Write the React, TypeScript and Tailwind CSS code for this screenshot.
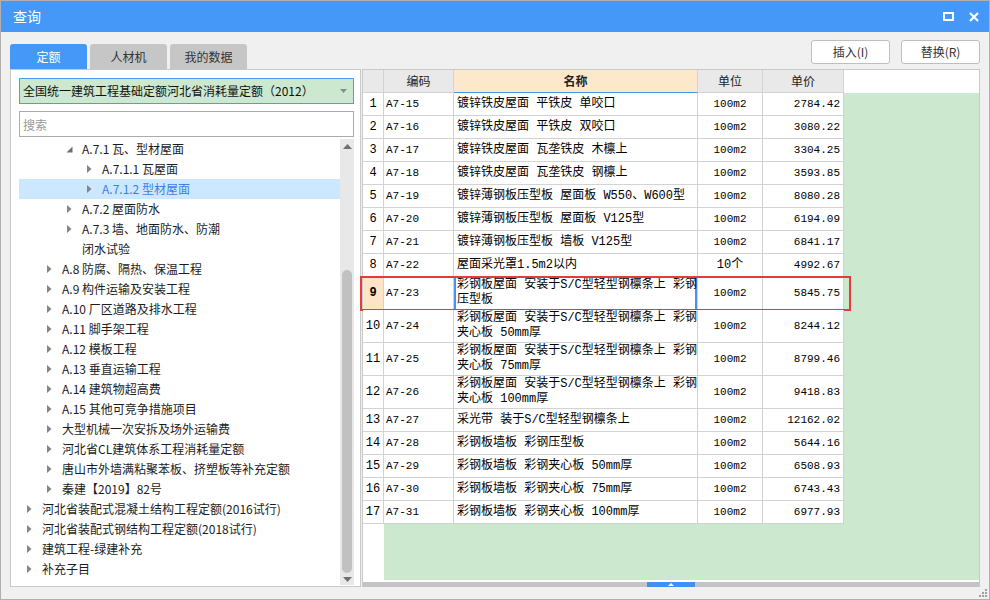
import React from "react";

type TreeItem = { level: 1 | 2 | 3 | 4; label: string; arrow?: "open" | "closed" | "none"; selected?: boolean };

const tree: TreeItem[] = [
  { level: 3, label: "A.7.1 瓦、型材屋面", arrow: "open" },
  { level: 4, label: "A.7.1.1 瓦屋面" },
  { level: 4, label: "A.7.1.2 型材屋面", selected: true },
  { level: 3, label: "A.7.2 屋面防水" },
  { level: 3, label: "A.7.3 墙、地面防水、防潮" },
  { level: 3, label: "闭水试验", arrow: "none" },
  { level: 2, label: "A.8 防腐、隔热、保温工程" },
  { level: 2, label: "A.9 构件运输及安装工程" },
  { level: 2, label: "A.10 厂区道路及排水工程" },
  { level: 2, label: "A.11 脚手架工程" },
  { level: 2, label: "A.12 模板工程" },
  { level: 2, label: "A.13 垂直运输工程" },
  { level: 2, label: "A.14 建筑物超高费" },
  { level: 2, label: "A.15 其他可竞争措施项目" },
  { level: 2, label: "大型机械一次安拆及场外运输费" },
  { level: 2, label: "河北省CL建筑体系工程消耗量定额" },
  { level: 2, label: "唐山市外墙满粘聚苯板、挤塑板等补充定额" },
  { level: 2, label: "秦建【2019】82号" },
  { level: 1, label: "河北省装配式混凝土结构工程定额(2016试行)" },
  { level: 1, label: "河北省装配式钢结构工程定额(2018试行)" },
  { level: 1, label: "建筑工程-绿建补充" },
  { level: 1, label: "补充子目" },
];

const indent: Record<number, string> = {
  1: "pl-[8px]",
  2: "pl-[28px]",
  3: "pl-[48px]",
  4: "pl-[68px]",
};

type Quota = { n: number; code: string; name: string[]; unit: string; price: string };

const rows: Quota[] = [
  { n: 1, code: "A7-15", name: ["镀锌铁皮屋面 平铁皮 单咬口"], unit: "100m2", price: "2784.42" },
  { n: 2, code: "A7-16", name: ["镀锌铁皮屋面 平铁皮 双咬口"], unit: "100m2", price: "3080.22" },
  { n: 3, code: "A7-17", name: ["镀锌铁皮屋面 瓦垄铁皮 木檩上"], unit: "100m2", price: "3304.25" },
  { n: 4, code: "A7-18", name: ["镀锌铁皮屋面 瓦垄铁皮 钢檩上"], unit: "100m2", price: "3593.85" },
  { n: 5, code: "A7-19", name: ["镀锌薄钢板压型板 屋面板 W550、W600型"], unit: "100m2", price: "8080.28" },
  { n: 6, code: "A7-20", name: ["镀锌薄钢板压型板 屋面板 V125型"], unit: "100m2", price: "6194.09" },
  { n: 7, code: "A7-21", name: ["镀锌薄钢板压型板 墙板 V125型"], unit: "100m2", price: "6841.17" },
  { n: 8, code: "A7-22", name: ["屋面采光罩1.5m2以内"], unit: "10个", price: "4992.67" },
  { n: 9, code: "A7-23", name: ["彩钢板屋面 安装于S/C型轻型钢檩条上 彩钢", "压型板"], unit: "100m2", price: "5845.75" },
  { n: 10, code: "A7-24", name: ["彩钢板屋面 安装于S/C型轻型钢檩条上 彩钢", "夹心板 50mm厚"], unit: "100m2", price: "8244.12" },
  { n: 11, code: "A7-25", name: ["彩钢板屋面 安装于S/C型轻型钢檩条上 彩钢", "夹心板 75mm厚"], unit: "100m2", price: "8799.46" },
  { n: 12, code: "A7-26", name: ["彩钢板屋面 安装于S/C型轻型钢檩条上 彩钢", "夹心板 100mm厚"], unit: "100m2", price: "9418.83" },
  { n: 13, code: "A7-27", name: ["采光带 装于S/C型轻型钢檩条上"], unit: "100m2", price: "12162.02" },
  { n: 14, code: "A7-28", name: ["彩钢板墙板 彩钢压型板"], unit: "100m2", price: "5644.16" },
  { n: 15, code: "A7-29", name: ["彩钢板墙板 彩钢夹心板 50mm厚"], unit: "100m2", price: "6508.93" },
  { n: 16, code: "A7-30", name: ["彩钢板墙板 彩钢夹心板 75mm厚"], unit: "100m2", price: "6743.43" },
  { n: 17, code: "A7-31", name: ["彩钢板墙板 彩钢夹心板 100mm厚"], unit: "100m2", price: "6977.93" },
];

function Arrow({ kind }: { kind: "open" | "closed" | "none" }) {
  return (
    <span className="flex w-[15px] shrink-0 items-center">
      {kind === "closed" && (
        <svg width="5" height="8" viewBox="0 0 5 8">
          <polygon points="0,0 4.5,4 0,8" fill="#848484" />
        </svg>
      )}
      {kind === "open" && (
        <svg width="7" height="7" viewBox="0 0 7 7" className="-ml-[1px]">
          <polygon points="6.5,0.5 6.5,6.5 0.5,6.5" fill="#6e6e6e" />
        </svg>
      )}
    </span>
  );
}

function TreePanel() {
  return (
    <div className="flex h-[518px] w-[351px] shrink-0 flex-col border border-[#c9c9c9] bg-white pl-[8px] pr-[6px]">
      <div className="mt-[8px] flex h-[26px] items-center justify-between border border-[#4d9bf5] bg-[#cce8cf] pl-[3px] pr-[6px] text-[12px] text-[#111]">
        <span>全国统一建筑工程基础定额河北省消耗量定额（2012）</span>
        <svg width="7" height="4" viewBox="0 0 7 4">
          <polygon points="0,0 7,0 3.5,4" fill="#8a8a8a" />
        </svg>
      </div>
      <input
        readOnly
        placeholder="搜索"
        className="mt-[7px] h-[26px] border border-[#ababab] bg-white px-[3px] text-[12px] outline-none placeholder:text-[#9a9a9a]"
      />
      <div className="mt-[2px] flex min-h-0 flex-1 pb-[1px]">
        <div className="flex-1">
          {tree.map((t) => (
            <div
              key={t.label}
              className={`flex h-[20px] items-center text-[12px] leading-[20px] ${indent[t.level]} ${
                t.selected ? "bg-[#cce8ff] text-[#3a7fe6]" : "text-[#1c1c1c]"
              }`}
            >
              <Arrow kind={t.arrow ?? "closed"} />
              <span className="whitespace-nowrap">{t.label}</span>
            </div>
          ))}
        </div>
        <div className="flex w-[14px] shrink-0 flex-col items-center bg-[#e8e8e8]">
          <div className="flex h-[10px] w-full items-end justify-center">
            <svg width="9" height="5" viewBox="0 0 9 5">
              <polygon points="0,5 9,5 4.5,0" fill="#707070" />
            </svg>
          </div>
          <div className="flex-1" />
          <div className="h-[303px] w-[10px] rounded-full bg-[#c1c1c1]" />
          <div className="flex h-[12px] w-full items-center justify-center">
            <svg width="9" height="5" viewBox="0 0 9 5">
              <polygon points="0,0 9,0 4.5,5" fill="#707070" />
            </svg>
          </div>
        </div>
      </div>
    </div>
  );
}

const cell = "shrink-0 border-r border-b border-[#d3d3d3]";

function QuotaRow({ r }: { r: Quota }) {
  const tall = r.name.length > 1;
  const active = r.n === 9;
  return (
    <div className={`relative flex ${tall ? "h-[33px]" : "h-[23px]"}`}>
      <div
        className={`${cell} flex w-[21px] items-center justify-center text-[12px] ${
          active ? "bg-[#fde4c6] font-bold" : "bg-white"
        }`}
      >
        {r.n}
      </div>
      <div className={`${cell} flex w-[70px] items-center bg-white pl-[2px] text-[11px]`}>{r.code}</div>
      <div
        className={`${cell} flex w-[244px] flex-col justify-center overflow-hidden bg-white pl-[3px] text-[12px] leading-[15px] ${
          active ? "shadow-[inset_2px_0_0_#4a92f0,inset_-2px_0_0_#4a92f0]" : ""
        }`}
      >
        {r.name.map((line) => (
          <span key={line} className="whitespace-pre">
            {line}
          </span>
        ))}
      </div>
      <div className={`${cell} flex w-[65px] items-center justify-center bg-white text-[11px]`}>
        {r.unit === "10个" ? <span className="text-[12px]">10个</span> : r.unit}
      </div>
      <div className={`${cell} flex w-[81px] items-center justify-end bg-white pr-[3px] text-[11px]`}>{r.price}</div>
      {active && (
        <div className="pointer-events-none absolute -left-[3px] -top-[1px] h-[35px] w-[491px] border-2 border-[#e53b3b]" />
      )}
    </div>
  );
}

function QuotaTable() {
  return (
    <div className="ml-[1px] flex h-[518px] flex-1 flex-col border-x border-t border-[#c9c9c9] bg-white [font-family:'Liberation_Mono','Noto_Sans_CJK_SC',monospace] text-[#000]">
      <div className="flex h-[23px] shrink-0 text-[12px] text-[#222] [font-family:'Noto_Sans_CJK_SC',sans-serif]">
        <div className={`${cell} w-[21px] bg-[#e9e9e9]`} />
        <div className={`${cell} flex w-[70px] items-center justify-center bg-[#e9e9e9]`}>编码</div>
        <div className="flex w-[244px] shrink-0 items-center justify-center border-r border-b border-r-[#d3d3d3] border-b-[#4a92f0] bg-[#fde8cc] font-bold">
          名称
        </div>
        <div className={`${cell} flex w-[65px] items-center justify-center bg-[#e9e9e9]`}>单位</div>
        <div className={`${cell} flex w-[81px] items-center justify-center bg-[#e9e9e9]`}>单价</div>
      </div>
      <div className="flex flex-1 flex-col bg-[#cce8cf]">
        {rows.map((r) => (
          <QuotaRow key={r.n} r={r} />
        ))}
        <div className="flex flex-1">
          <div className="w-[21px] bg-white" />
        </div>
      </div>
      <div className="h-[2px] shrink-0 bg-white" />
      <div className="flex h-[5px] shrink-0 justify-center bg-[#c4c4c4]">
        <div className="flex w-[48px] items-center justify-center bg-[#3f8ff5]">
          <svg width="6" height="3" viewBox="0 0 6 3">
            <polygon points="0,3 6,3 3,0" fill="#ffffff" />
          </svg>
        </div>
      </div>
    </div>
  );
}

export default function App() {
  const tabs = ["定额", "人材机", "我的数据"];
  return (
    <div className="flex h-[600px] w-[990px] flex-col border border-[#b0b0b0] bg-[#f0f0f0] [font-family:'Noto_Sans_CJK_SC',sans-serif]">
      <div className="flex h-[31px] shrink-0 items-center justify-between bg-[#4597f8] pl-[12px] pr-[10px] text-white">
        <span className="text-[14px]">查询</span>
        <div className="flex items-center gap-[15px]">
          <svg width="11" height="9" viewBox="0 0 11 9">
            <rect x="1" y="1" width="9" height="7" fill="none" stroke="#fff" strokeWidth="2" />
          </svg>
          <svg width="10" height="10" viewBox="0 0 10 10">
            <path d="M1 1 L9 9 M9 1 L1 9" stroke="#fff" strokeWidth="2.2" />
          </svg>
        </div>
      </div>

      <div className="flex flex-1 flex-col px-[9px]">
        <div className="flex h-[37px] shrink-0 items-end justify-between">
          <div className="flex gap-[3px]">
            {tabs.map((t, i) => (
              <div
                key={t}
                className={`flex h-[25px] w-[77px] items-center justify-center rounded-t-[3px] text-[12px] ${
                  i === 0 ? "bg-[#4597f8] text-white" : "bg-[#c6c6c6] text-[#333]"
                }`}
              >
                {t}
              </div>
            ))}
          </div>
          <div className="flex gap-[11px] self-start pt-[8px]">
            <button className="h-[24px] w-[79px] rounded-[3px] border border-[#bfbfbf] bg-white text-[12px] text-[#333]">
              插入(I)
            </button>
            <button className="h-[24px] w-[79px] rounded-[3px] border border-[#bfbfbf] bg-white text-[12px] text-[#333]">
              替换(R)
            </button>
          </div>
        </div>

        <div className="flex">
          <TreePanel />
          <QuotaTable />
        </div>

        <div className="flex flex-1 items-end justify-end pb-[2px] pr-[0px]">
          <svg width="8" height="8" viewBox="0 0 8 8" className="-mr-[7px]">
            {[
              [6, 0],
              [6, 3],
              [3, 3],
              [6, 6],
              [3, 6],
              [0, 6],
            ].map(([x, y]) => (
              <rect key={`${x}-${y}`} x={x} y={y} width="2" height="2" fill="#a0a0a0" />
            ))}
          </svg>
        </div>
      </div>
    </div>
  );
}
